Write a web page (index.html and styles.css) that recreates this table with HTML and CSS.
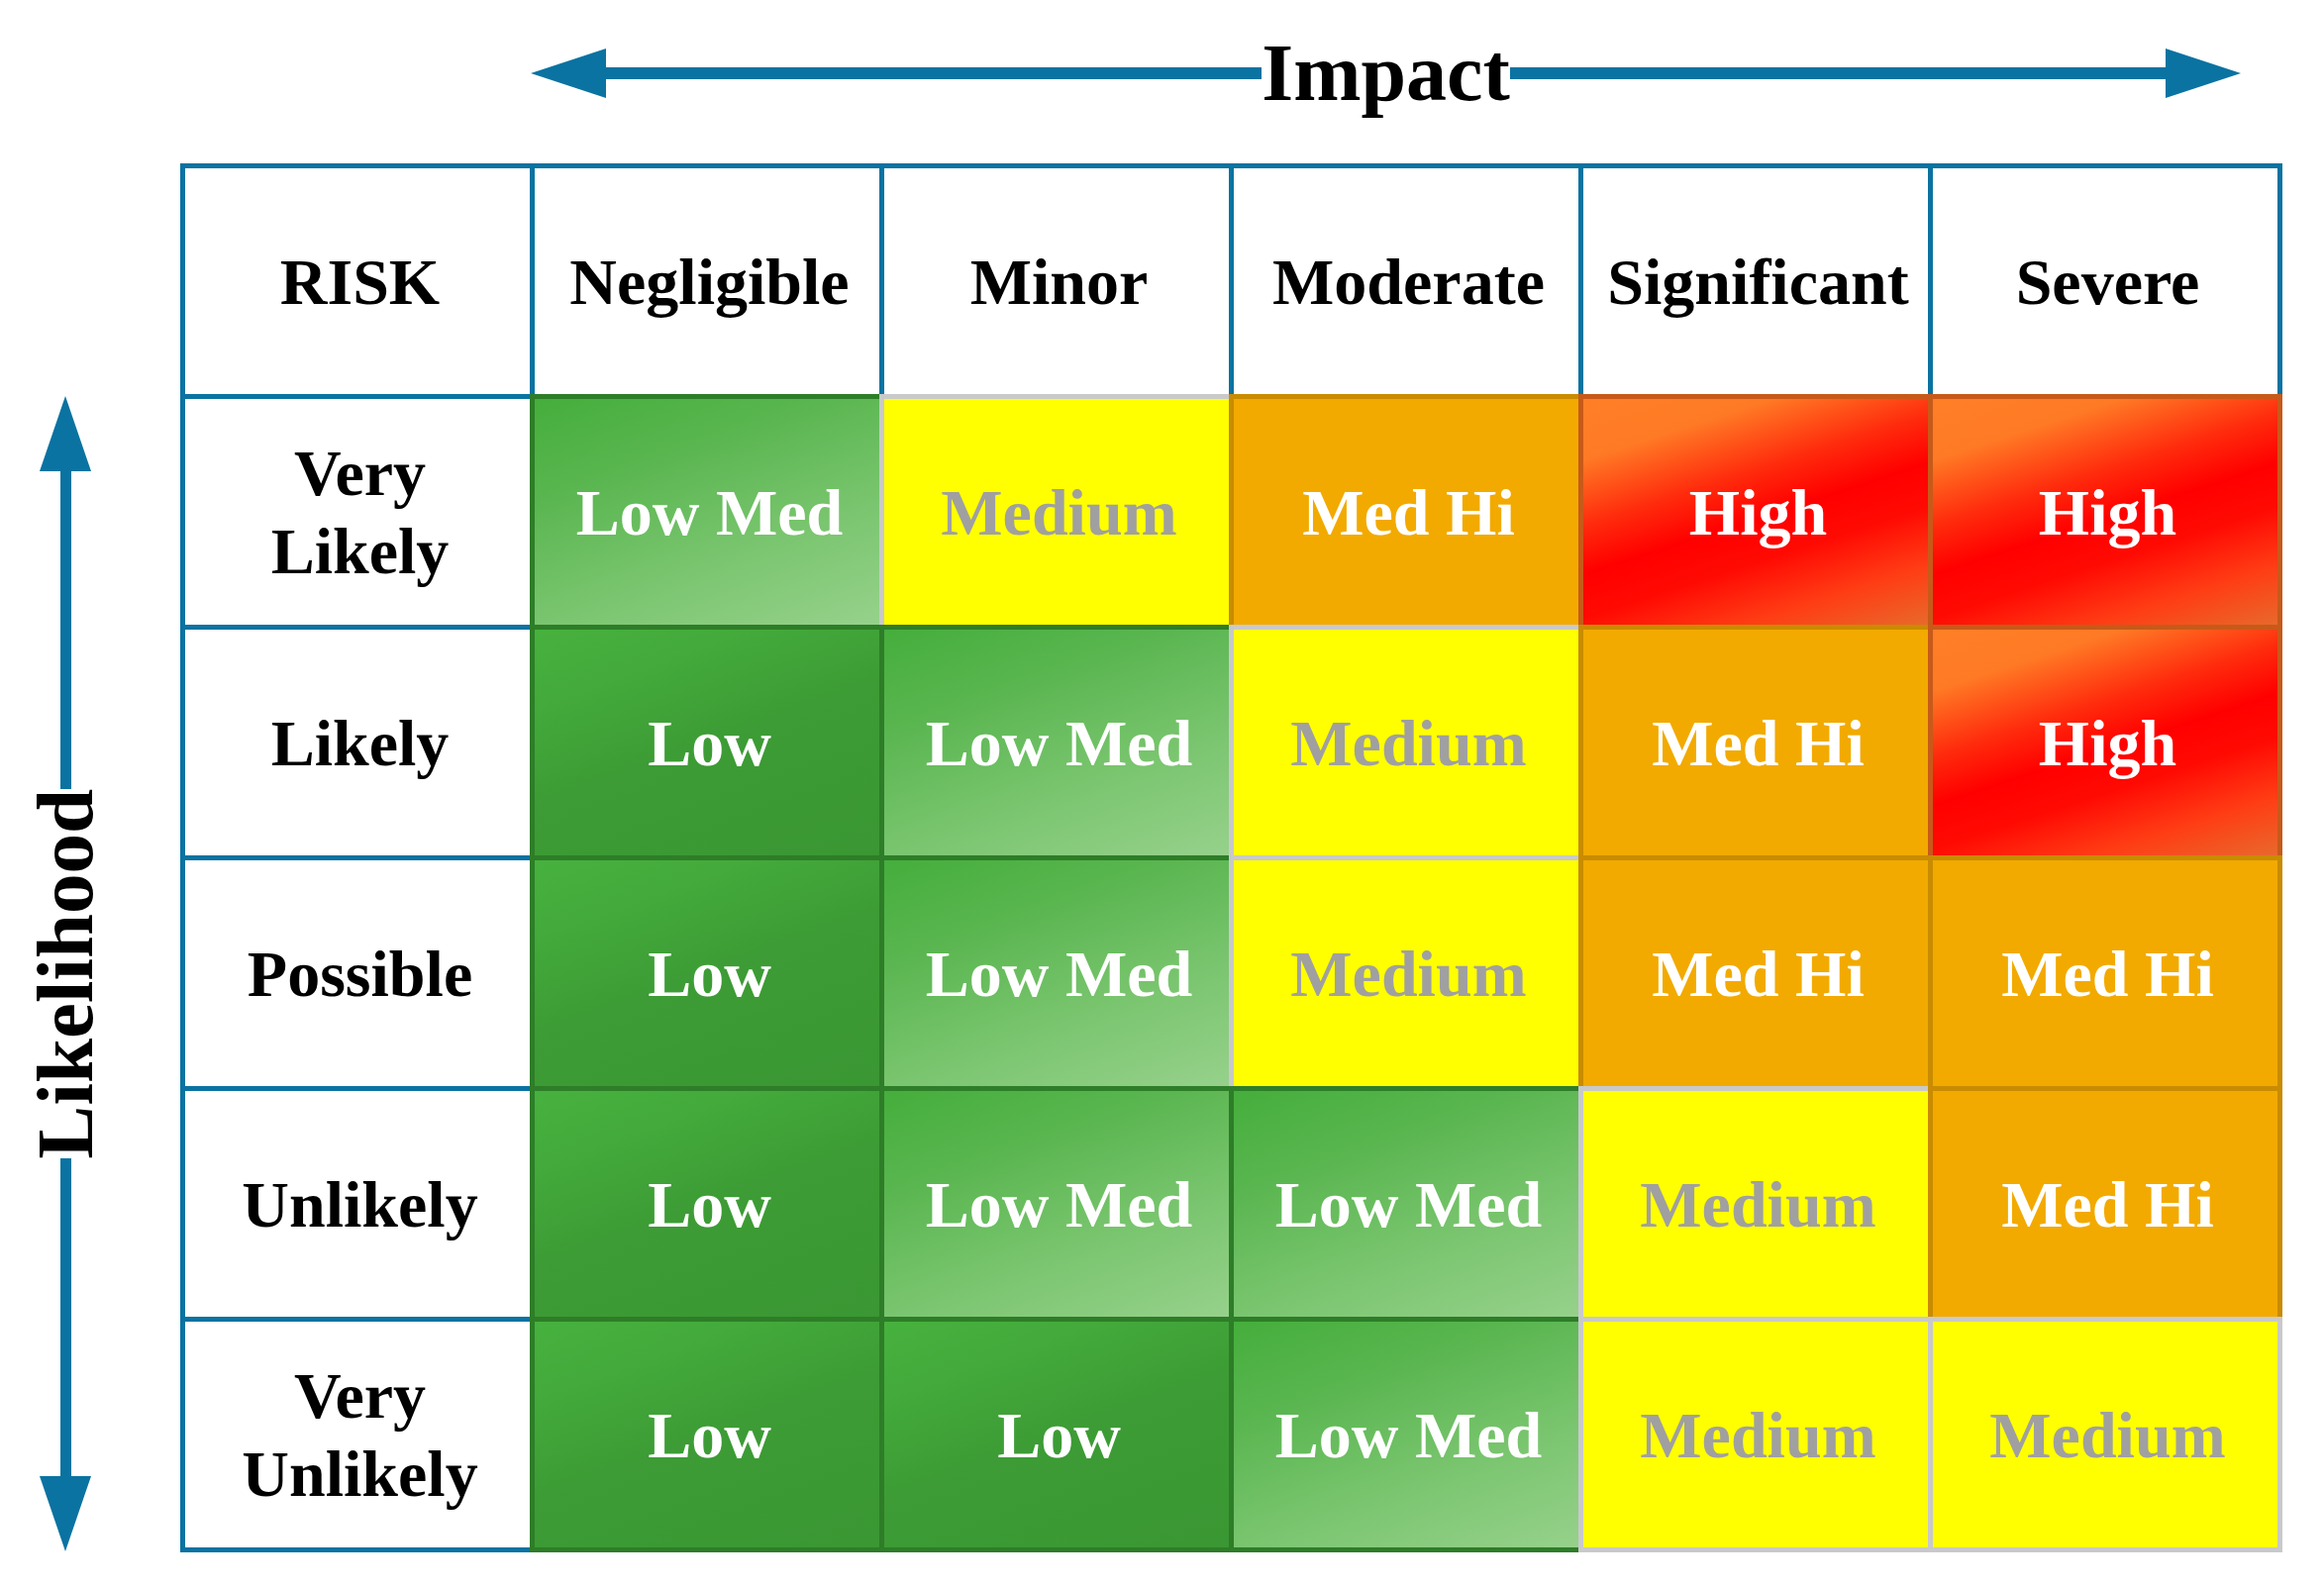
FILE: index.html
```html
<!DOCTYPE html>
<html>
<head>
<meta charset="utf-8">
<title>Risk Matrix</title>
<link rel="stylesheet" href="styles.css">
</head>
<body>
<div class="page">
  <div class="corner"></div>
  <div class="impact">
    <svg class="head" width="76" height="50" viewBox="0 0 76 50"><polygon points="0,25 76,0 76,50"/></svg>
    <div class="shaft-h"></div>
    <div class="axis-label">Impact</div>
    <div class="shaft-h"></div>
    <svg class="head" width="76" height="50" viewBox="0 0 76 50"><polygon points="0,0 76,25 0,50"/></svg>
  </div>
  <div class="likelihood">
    <svg class="head" width="52" height="76" viewBox="0 0 52 76"><polygon points="26,0 52,76 0,76"/></svg>
    <div class="shaft-v"></div>
    <div class="axis-label vertical">Likelihood</div>
    <div class="shaft-v"></div>
    <svg class="head" width="52" height="76" viewBox="0 0 52 76"><polygon points="0,0 52,0 26,76"/></svg>
  </div>
  <div class="matrix">
    <div class="cell head-cell">RISK</div>
    <div class="cell head-cell">Negligible</div>
    <div class="cell head-cell">Minor</div>
    <div class="cell head-cell">Moderate</div>
    <div class="cell head-cell">Significant</div>
    <div class="cell head-cell">Severe</div>

    <div class="cell head-cell">Very<br>Likely</div>
    <div class="cell lowmed">Low Med</div>
    <div class="cell med">Medium</div>
    <div class="cell medhi">Med Hi</div>
    <div class="cell high">High</div>
    <div class="cell high">High</div>

    <div class="cell head-cell">Likely</div>
    <div class="cell low">Low</div>
    <div class="cell lowmed">Low Med</div>
    <div class="cell med">Medium</div>
    <div class="cell medhi">Med Hi</div>
    <div class="cell high">High</div>

    <div class="cell head-cell">Possible</div>
    <div class="cell low">Low</div>
    <div class="cell lowmed">Low Med</div>
    <div class="cell med">Medium</div>
    <div class="cell medhi">Med Hi</div>
    <div class="cell medhi">Med Hi</div>

    <div class="cell head-cell">Unlikely</div>
    <div class="cell low">Low</div>
    <div class="cell lowmed">Low Med</div>
    <div class="cell lowmed">Low Med</div>
    <div class="cell med">Medium</div>
    <div class="cell medhi">Med Hi</div>

    <div class="cell head-cell">Very<br>Unlikely</div>
    <div class="cell low">Low</div>
    <div class="cell low">Low</div>
    <div class="cell lowmed">Low Med</div>
    <div class="cell med">Medium</div>
    <div class="cell med">Medium</div>
  </div>
</div>
</body>
</html>
```
FILE: styles.css
```css
html, body {
  margin: 0;
  padding: 0;
  background: #ffffff;
}

body {
  width: 2347px;
  height: 1603px;
  overflow: hidden;
  font-family: "Liberation Serif", "Times New Roman", serif;
  font-weight: bold;
  color: #000000;
}

.page {
  display: grid;
  grid-template-columns: 182px 2123px;
  grid-template-rows: 165px 1403px;
}

.head {
  display: block;
  flex-shrink: 0;
  fill: #0a73a1;
}

.impact {
  align-self: start;
  display: flex;
  align-items: center;
  margin-top: 33px;
  margin-left: 354px;
  width: 1727px;
  height: 82px;
}

.shaft-h {
  flex: 1;
  height: 12px;
  background: #0a73a1;
}

.axis-label {
  font-size: 82px;
  line-height: 82px;
  white-space: nowrap;
}

.likelihood {
  display: flex;
  flex-direction: column;
  align-items: center;
  width: 132px;
  padding-top: 235px;
  padding-bottom: 1px;
  box-sizing: border-box;
}

.shaft-v {
  flex: 1;
  width: 11px;
  background: #0a73a1;
}

.vertical {
  font-size: 81px;
  line-height: 81px;
  writing-mode: vertical-rl;
  transform: rotate(180deg);
}

.matrix {
  display: grid;
  grid-template-columns: repeat(6, 353px);
  grid-template-rows: repeat(6, 233px);
}

.cell {
  margin-right: -5px;
  margin-bottom: -5px;
  border: 5px solid #0a73a1;
  padding-left: 5px;
  display: flex;
  align-items: center;
  justify-content: center;
  text-align: center;
  font-size: 66px;
  line-height: 79px;
  white-space: nowrap;
}

.head-cell {
  background: #ffffff;
  color: #000000;
}

.low {
  border-color: #2e7d28;
  color: #ffffff;
  background: linear-gradient(160deg, #47b13e 0%, #43aa3b 22%, #3d9c35 50%, #3a9733 100%);
}

.lowmed {
  border-color: #2e7d28;
  color: #ffffff;
  background: linear-gradient(160deg, #45ae3c 0%, #5ab650 30%, #7ac56f 65%, #96d18b 100%);
}

.med {
  border-color: #c9c9c9;
  color: #a0a0a0;
  background: #ffff00;
}

.medhi {
  border-color: #c98b00;
  color: #ffffff;
  background: #f2aa00;
}

.high {
  border-color: #c75a19;
  color: #ffffff;
  background: linear-gradient(162deg, #ff7f27 0%, #ff7a25 18%, #ff2a0c 38%, #ff0000 52%, #ff0a03 65%, #ff3c14 82%, #e8692b 100%);
}
```
